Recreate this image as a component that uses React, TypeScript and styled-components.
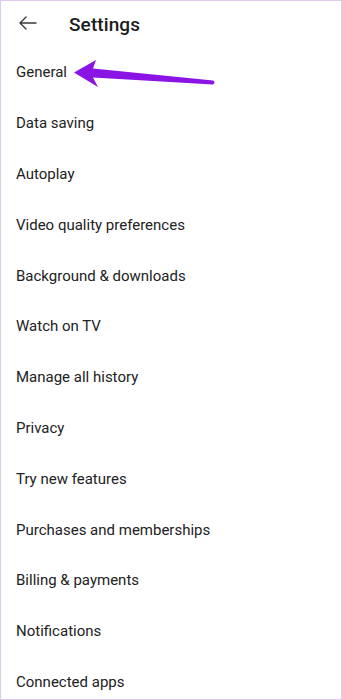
import React from 'react';
import styled, { createGlobalStyle } from 'styled-components';

const items = [
  'General',
  'Data saving',
  'Autoplay',
  'Video quality preferences',
  'Background & downloads',
  'Watch on TV',
  'Manage all history',
  'Privacy',
  'Try new features',
  'Purchases and memberships',
  'Billing & payments',
  'Notifications',
  'Connected apps',
];

const GlobalStyle = createGlobalStyle`
  html, body {
    margin: 0;
    padding: 0;
    background: #fff;
  }
  * {
    box-sizing: border-box;
  }
`;

const App = () => {
  return (
    <Page>
      <GlobalStyle />
      <Header>
        <BackButton aria-label='Back'>
          <svg width='20' height='16' viewBox='0 0 20 16' fill='none'>
            <path
              d='M18 8H2M8 2L2 8l6 6'
              stroke='#3a3a3a'
              strokeWidth='1.4'
              strokeLinecap='round'
              strokeLinejoin='round'
            />
          </svg>
        </BackButton>
        <Title>Settings</Title>
      </Header>
      <List>
        {items.map((label) => (
          <Row key={label}>{label}</Row>
        ))}
      </List>
      {/* annotation arrow pointing at General */}
      <Pointer width='342' height='100' viewBox='0 0 342 100'>
        <path
          d='M73 71.5 L95 59 L92 67.5 L212 79.5 Q215 81.5 212 83.5 L92 76.5 L97 86 Z'
          fill='#8a14e4'
        />
      </Pointer>
    </Page>
  );
};

export default App;

const Page = styled.div`
  position: relative;
  width: 342px;
  height: 700px;
  border: 1px solid #dccbec;
  background: #fff;
  overflow: hidden;
  font-family: Roboto, 'Noto Sans', sans-serif;
`;

const Header = styled.header`
  height: 46px;
  display: flex;
  align-items: center;
  padding-left: 16px;
`;

const BackButton = styled.button`
  display: flex;
  align-items: center;
  justify-content: center;
  width: 22px;
  height: 22px;
  padding: 0;
  margin-top: -2px;
  border: none;
  background: none;
`;

const Title = styled.h1`
  margin: 0 0 0 30px;
  font-size: 19px;
  font-weight: 500;
  color: #1c1c1c;
  letter-spacing: 0.1px;
`;

const List = styled.ul`
  list-style: none;
  margin: 0;
  padding: 0;
`;

const Row = styled.li`
  height: 50.8px;
  display: flex;
  align-items: center;
  padding-left: 15px;
  font-size: 15px;
  color: #222;
`;

const Pointer = styled.svg`
  position: absolute;
  top: 0;
  left: 0;
  pointer-events: none;
`;
